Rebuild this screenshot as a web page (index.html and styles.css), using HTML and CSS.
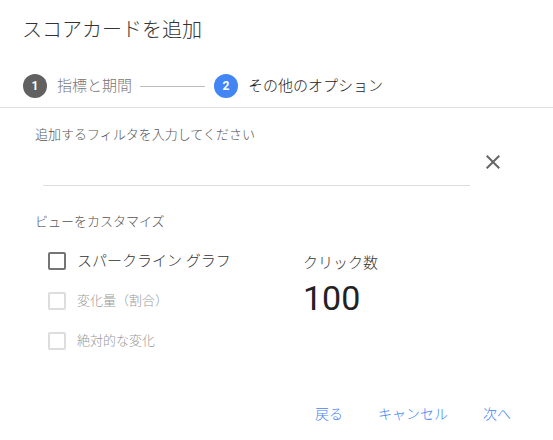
FILE: index.html
```html
<!DOCTYPE html>
<html lang="ja">
<head>
  <meta charset="UTF-8" />
  <title>スコアカードを追加</title>
  <link rel="stylesheet" href="styles.css">
</head>
<body>
  <div class="dialog">
    <h1 class="title">スコアカードを追加</h1>

    <div class="stepper">
      <span class="step-num done">1</span>
      <span class="step-label">指標と期間</span>
      <span class="step-line"></span>
      <span class="step-num active">2</span>
      <span class="step-label current">その他のオプション</span>
    </div>

    <div class="content">
      <p class="field-label">追加するフィルタを入力してください</p>
      <div class="filter-row">
        <input type="text" class="filter-input">
        <button class="icon-btn" type="button" aria-label="クリア">
          <svg viewBox="0 0 24 24" width="24" height="24"><path d="M19 6.41L17.59 5 12 10.59 6.41 5 5 6.41 10.59 12 5 17.59 6.41 19 12 13.41 17.59 19 19 17.59 13.41 12z" fill="#666"/></svg>
        </button>
      </div>

      <p class="field-label section">ビューをカスタマイズ</p>

      <div class="options">
        <div class="checks">
          <label class="check">
            <span class="box"></span>
            <span class="check-text">スパークライン グラフ</span>
          </label>
          <label class="check disabled">
            <span class="box"></span>
            <span class="check-text">変化量（割合）</span>
          </label>
          <label class="check disabled">
            <span class="box"></span>
            <span class="check-text">絶対的な変化</span>
          </label>
        </div>
        <div class="preview">
          <div class="metric-name">クリック数</div>
          <div class="metric-value">100</div>
        </div>
      </div>
    </div>

    <div class="actions">
      <button type="button" class="text-btn">戻る</button>
      <button type="button" class="text-btn">キャンセル</button>
      <button type="button" class="text-btn">次へ</button>
    </div>
  </div>
</body>
</html>
```

FILE: styles.css
```css
body {
  margin: 0;
  font-family: Roboto, "Noto Sans CJK JP", sans-serif;
  font-weight: 300;
  color: #333;
  background: #fff;
}
.dialog {
  width: 553px;
  height: 440px;
  background: #fff;
}
.title {
  margin: 0;
  padding: 16px 22px 0;
  font-size: 20px;
  font-weight: 300;
  line-height: 28px;
  color: #333;
}
.stepper {
  display: flex;
  align-items: center;
  margin-top: 30px;
  padding: 0 22px 9px 23px;
  border-bottom: 1px solid #e0e0e0;
}
.step-num {
  width: 24px;
  height: 24px;
  border-radius: 50%;
  color: #fff;
  font-size: 12px;
  font-weight: 700;
  line-height: 24px;
  text-align: center;
}
.step-num.done {
  background: #616161;
}
.step-num.active {
  background: #4285f4;
}
.step-label {
  margin-left: 10px;
  font-size: 15px;
  line-height: 24px;
  color: #777;
}
.step-label.current {
  color: #222;
}
.step-line {
  width: 65px;
  height: 1px;
  margin: 0 9px 0 8px;
  background: #bdbdbd;
}
.content {
  padding-left: 35px;
}
.field-label {
  margin: 18px 0 0;
  font-size: 13px;
  line-height: 18px;
  color: #555;
}
.field-label.section {
  margin-top: 27px;
}
.filter-row {
  display: flex;
  align-items: flex-end;
}
.filter-input {
  box-sizing: border-box;
  width: 427px;
  height: 42px;
  margin-left: 8px;
  padding: 0;
  border: none;
  border-bottom: 1px solid #ddd;
  outline: none;
  font-size: 15px;
}
.icon-btn {
  margin: 0 0 12px 11px;
  padding: 0;
  border: none;
  background: none;
  width: 24px;
  height: 24px;
  cursor: pointer;
}
.icon-btn svg {
  display: block;
}
.options {
  display: flex;
  margin-top: 10px;
}
.checks {
  box-sizing: border-box;
  width: 268px;
  padding-left: 13px;
}
.check {
  display: flex;
  align-items: center;
  height: 40px;
}
.box {
  box-sizing: border-box;
  width: 18px;
  height: 18px;
  border: 2px solid #757575;
  border-radius: 2px;
}
.check-text {
  margin-left: 11px;
  font-size: 15px;
  line-height: 20px;
  color: #333;
}
.check.disabled .box {
  border-color: #ddd;
}
.check.disabled .check-text {
  font-size: 13px;
  color: #999;
}
.preview {
  padding-top: 12px;
}
.metric-name {
  font-size: 15px;
  line-height: 20px;
  color: #333;
}
.metric-value {
  margin-top: 5px;
  font-size: 34px;
  font-weight: 400;
  line-height: 40px;
  color: #222;
}
.actions {
  display: flex;
  justify-content: flex-end;
  gap: 19px;
  margin-top: 34px;
  padding-right: 34px;
}
.text-btn {
  height: 36px;
  padding: 0 8px;
  border: none;
  background: none;
  font-family: Roboto, "Noto Sans CJK JP", sans-serif;
  font-size: 14px;
  font-weight: 300;
  color: #4285f4;
  cursor: pointer;
}
```
